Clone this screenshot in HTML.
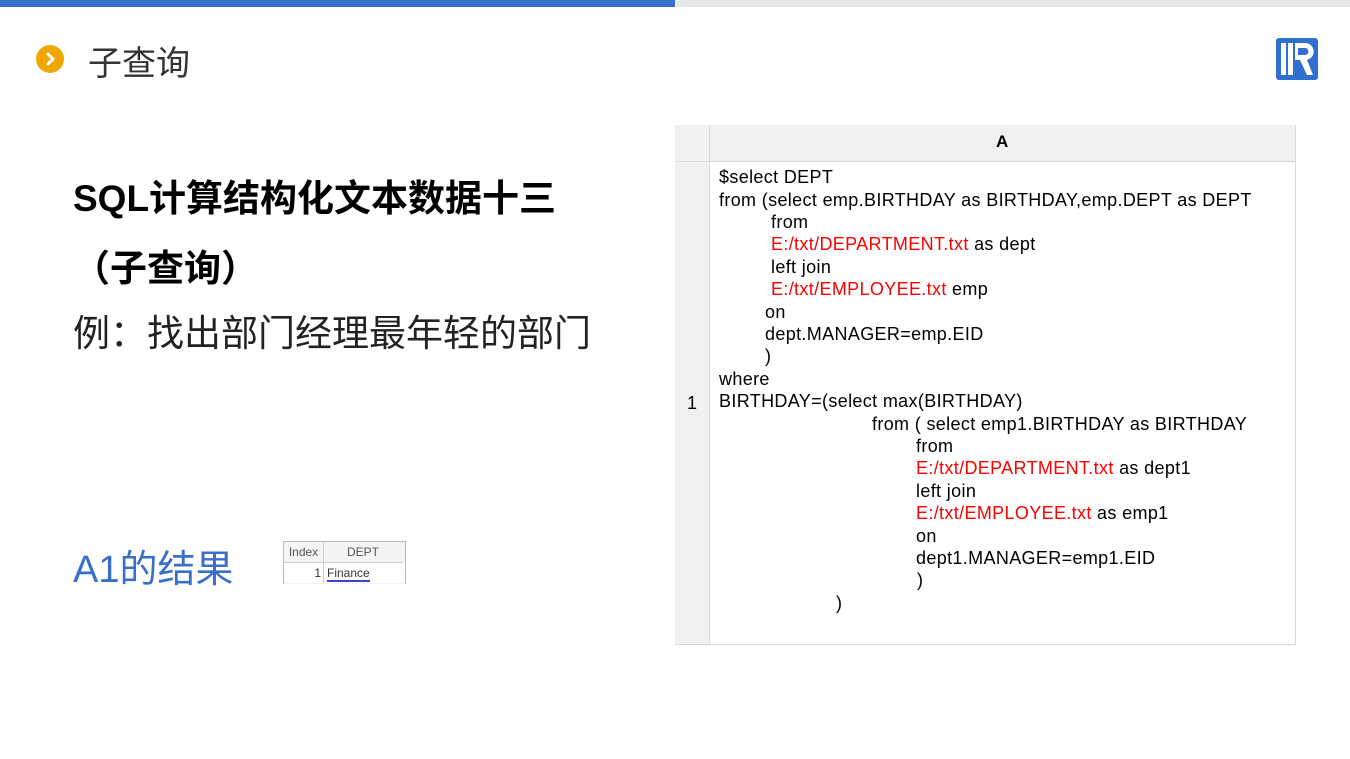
<!DOCTYPE html>
<html><head><meta charset="utf-8"><style>
body{margin:0;width:1350px;height:759px;background:#fff;position:relative;overflow:hidden;font-family:"Liberation Sans","Noto Sans CJK SC",sans-serif}
.a{position:absolute;white-space:nowrap}
.code div{position:absolute;font-size:18px;line-height:22px;white-space:nowrap;color:#000;letter-spacing:0.35px}
.r{color:#f00}
</style></head><body>
<div class="a" style="left:0;top:0;width:675px;height:7px;background:#3a6fc9"></div>
<div class="a" style="left:675px;top:0;width:675px;height:7px;background:#e8e8e8"></div>
<div class="a" style="left:36px;top:45px;width:28px;height:28px;border-radius:50%;background:#f0a800"></div>
<svg class="a" style="left:36px;top:45px" width="28" height="28"><path d="M12 9 L17 14 L12 19" stroke="#fff" stroke-width="3" fill="none" stroke-linecap="round" stroke-linejoin="round"/></svg>
<div class="a" style="left:88px;top:36px;font-size:34px;color:#333">子查询</div>
<svg class="a" style="left:1276px;top:38px" width="42" height="42"><rect width="42" height="42" rx="3" fill="#2f6fd0"/><rect x="5" y="5" width="5" height="32" fill="#fff"/><rect x="12" y="5" width="5" height="32" fill="#fff"/><path d="M19 5 H29 a8.5 8.5 0 0 1 2 16.8 L37 37 H31 L24 22 H19 Z M22 10 V17 H29 a3.5 3.5 0 0 0 0 -7 Z" fill="#fff" fill-rule="evenodd"/></svg>
<div class="a" style="left:73px;top:168px;font-size:37px;font-weight:bold;color:#000">SQL计算结构化文本数据十三</div>
<div class="a" style="left:73px;top:238px;font-size:37px;font-weight:bold;color:#000">（子查询）</div>
<div class="a" style="left:73px;top:303px;font-size:37px;color:#222">例：找出部门经理最年轻的部门</div>
<div class="a" style="left:73px;top:538px;font-size:38px;color:#3a6fc9">A1的结果</div>
<div class="a" style="left:283px;top:541px;width:121px;height:42px;background:#f4f4f4;border:1px solid #bbb;border-bottom:none;font-size:12px;color:#333">
<div class="a" style="left:0;top:0;width:39px;height:20px;border-right:1px solid #ccc;border-bottom:1px solid #ccc;text-align:center;line-height:20px;color:#555">Index</div>
<div class="a" style="left:40px;top:0;width:78px;height:20px;border-bottom:1px solid #ccc;text-align:center;line-height:20px;color:#555">DEPT</div>
<div class="a" style="left:0;top:21px;width:37px;height:20px;border-right:1px solid #ccc;text-align:right;padding-right:2px;line-height:20px;background:#fff">1</div>
<div class="a" style="left:40px;top:21px;width:78px;height:20px;line-height:20px;background:#fff;padding-left:3px"><span style="border-bottom:2px solid #4040d0">Finance</span></div>
</div>
<div class="a" style="left:675px;top:125px;width:619px;height:518px;border:1px solid #d8d8d8;background:#fff"></div>
<div class="a" style="left:675px;top:125px;width:34px;height:519px;background:#f0f0f0;border-right:1px solid #d8d8d8"></div>
<div class="a" style="left:675px;top:125px;width:620px;height:36px;background:#f0f0f0;border-bottom:1px solid #d8d8d8"></div>
<div class="a" style="left:709px;top:125px;width:1px;height:36px;background:#d8d8d8"></div>
<div class="a" style="left:996px;top:132px;font-size:17px;font-weight:bold">A</div>
<div class="a" style="left:687px;top:393px;font-size:18px">1</div>
<div class="code">
<div style="left:719px;top:166px">$select DEPT</div>
<div style="left:719px;top:189px">from (select emp.BIRTHDAY as BIRTHDAY,emp.DEPT as DEPT</div>
<div style="left:771px;top:211px">from</div>
<div style="left:771px;top:233px"><span class="r">E:/txt/DEPARTMENT.txt</span> as dept</div>
<div style="left:771px;top:256px">left join</div>
<div style="left:771px;top:278px"><span class="r">E:/txt/EMPLOYEE.txt</span> emp</div>
<div style="left:765px;top:301px">on</div>
<div style="left:765px;top:323px">dept.MANAGER=emp.EID</div>
<div style="left:765px;top:345px">)</div>
<div style="left:719px;top:368px">where</div>
<div style="left:719px;top:390px">BIRTHDAY=(select max(BIRTHDAY)</div>
<div style="left:872px;top:413px">from ( select emp1.BIRTHDAY as BIRTHDAY</div>
<div style="left:916px;top:435px">from</div>
<div style="left:916px;top:457px"><span class="r">E:/txt/DEPARTMENT.txt</span> as dept1</div>
<div style="left:916px;top:480px">left join</div>
<div style="left:916px;top:502px"><span class="r">E:/txt/EMPLOYEE.txt</span> as emp1</div>
<div style="left:916px;top:525px">on</div>
<div style="left:916px;top:547px">dept1.MANAGER=emp1.EID</div>
<div style="left:917px;top:569px">)</div>
<div style="left:836px;top:592px">)</div>
</div>
</body></html>
